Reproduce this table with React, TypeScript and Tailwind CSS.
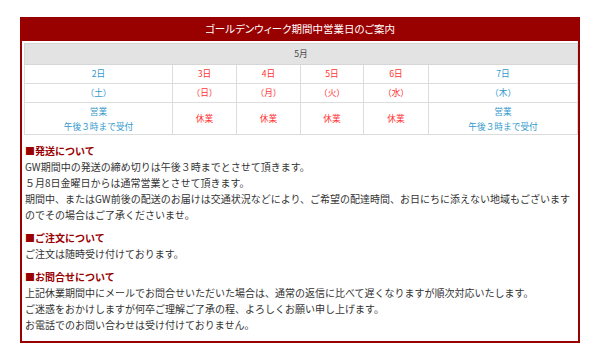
import React from 'react';

const font = { fontFamily: '"Noto Sans CJK JP", "Noto Sans", sans-serif' };

type Day = { date: string; week: string; open: boolean };

const days: Day[] = [
  { date: '2日', week: '（土）', open: true },
  { date: '3日', week: '（日）', open: false },
  { date: '4日', week: '（月）', open: false },
  { date: '5日', week: '（火）', open: false },
  { date: '6日', week: '（水）', open: false },
  { date: '7日', week: '（木）', open: true },
];

function Section({ title, lines }: { title: string; lines: string[] }) {
  return (
    <div>
      <p className="font-bold text-[#990000]">■{title}</p>
      {lines.map((l) => (
        <p key={l}>{l}</p>
      ))}
    </div>
  );
}

export default function App(): React.JSX.Element {
  return (
    <div className="w-[600px] h-[363px] bg-white pt-[17px] px-[20px]" style={font}>
      <div className="border-2 border-t-0 border-[#990000] h-[326px] overflow-hidden">
        <div className="h-[24px] bg-[#990000] text-white text-[10.5px] flex items-center justify-center [font-feature-settings:'palt']">
          ゴールデンウィーク期間中営業日のご案内
        </div>

        {/* 営業日カレンダー */}
        <table className="mt-[2px] mx-[2px] w-[553px] border-collapse table-fixed text-[8.7px] text-center">
          <colgroup>
            <col className="w-[148px]" />
            <col className="w-[64px]" />
            <col className="w-[64px]" />
            <col className="w-[63px]" />
            <col className="w-[65px]" />
            <col className="w-[149px]" />
          </colgroup>
          <thead>
            <tr>
              <th colSpan={6} className="h-[21px] p-0 bg-[#e3e3e3] border border-[#d6d6d6] font-normal text-[#444]">
                5月
              </th>
            </tr>
          </thead>
          <tbody>
            <tr>
              {days.map((d) => (
                <td
                  key={d.date}
                  className={`h-[19px] p-0 border border-[#dcdcdc] ${d.open ? 'text-[#3399cc]' : 'text-[#ff3333]'}`}
                >
                  {d.date}
                </td>
              ))}
            </tr>
            <tr>
              {days.map((d) => (
                <td
                  key={d.week}
                  className={`h-[19px] p-0 border border-[#dcdcdc] ${d.open ? 'text-[#3399cc]' : 'text-[#ff3333]'}`}
                >
                  {d.week}
                </td>
              ))}
            </tr>
            <tr>
              {days.map((d) =>
                d.open ? (
                  <td key={d.date + 'o'} className="h-[32px] p-0 border border-[#dcdcdc] text-[#3399cc] leading-[15px]">
                    営業
                    <br />
                    午後３時まで受付
                  </td>
                ) : (
                  <td key={d.date + 'c'} className="h-[32px] p-0 border border-[#dcdcdc] text-[#ff3333]">
                    休業
                  </td>
                ),
              )}
            </tr>
          </tbody>
        </table>

        <div className="pl-[3px] pt-[8px] text-[10px] leading-[16px] text-[#333] whitespace-nowrap flex flex-col gap-[7px]">
          <Section
            title="発送について"
            lines={[
              'GW期間中の発送の締め切りは午後３時までとさせて頂きます。',
              '５月8日金曜日からは通常営業とさせて頂きます。',
              '期間中、またはGW前後の配送のお届けは交通状況などにより、ご希望の配達時間、お日にちに添えない地域もございます',
              'のでその場合はご了承くださいませ。',
            ]}
          />
          <Section title="ご注文について" lines={['ご注文は随時受け付けております。']} />
          <Section
            title="お問合せについて"
            lines={[
              '上記休業期間中にメールでお問合せいただいた場合は、通常の返信に比べて遅くなりますが順次対応いたします。',
              'ご迷惑をおかけしますが何卒ご理解ご了承の程、よろしくお願い申し上げます。',
              'お電話でのお問い合わせは受け付けておりません。',
            ]}
          />
        </div>
      </div>
    </div>
  );
}
